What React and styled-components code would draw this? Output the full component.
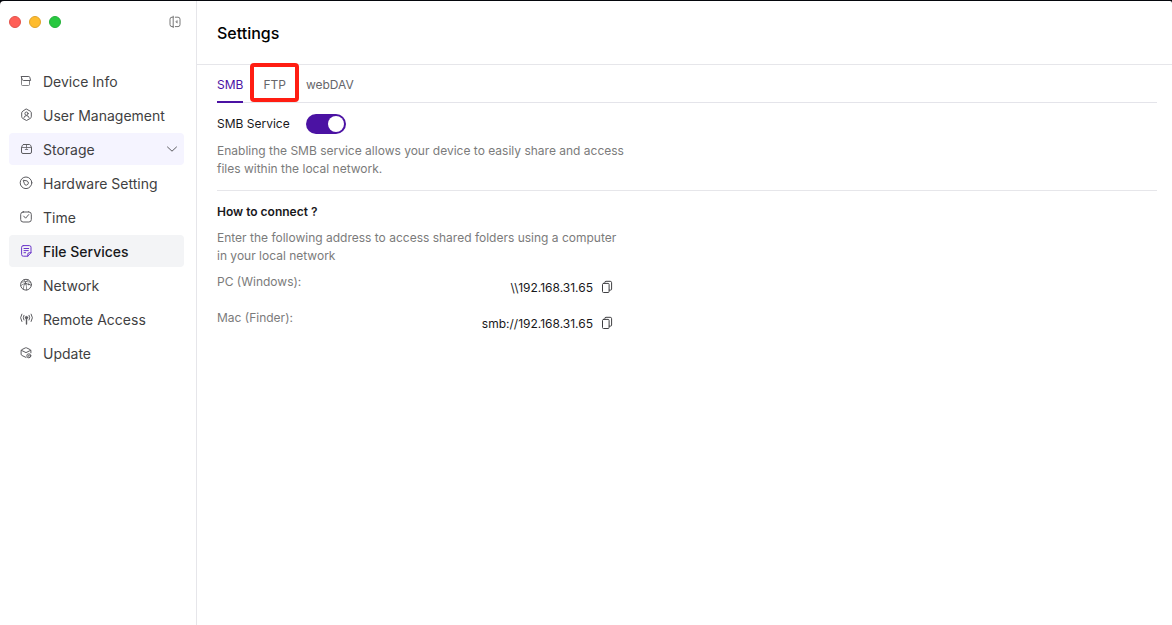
import React, { useState } from "react";
import styled, { createGlobalStyle, css } from "styled-components";

const GlobalStyle = createGlobalStyle`
  * {
    box-sizing: border-box;
  }
  body {
    margin: 0;
    background-color: #05070c;
    font-family: Inter, "Liberation Sans", sans-serif;
    color: #18181b;
  }
  button {
    border: none;
    padding: 0;
    background: none;
    font: inherit;
    color: inherit;
    cursor: pointer;
  }
`;

const Page = styled.div`
  min-height: 100vh;
  padding-top: 1px;
  display: flex;
`;

const Window = styled.div`
  flex: 1;
  display: flex;
  background-color: white;
  border-radius: 4px 2px 0 0;
`;

const Sidebar = styled.aside`
  width: 197px;
  flex-shrink: 0;
  border-right: 1px solid #e6e6ea;
`;

const TitleBar = styled.div`
  height: 42px;
  padding: 0 14px 0 9px;
  display: flex;
  align-items: center;
  justify-content: space-between;
`;

const Lights = styled.div`
  display: flex;
  gap: 8px;
`;

const Light = styled.button`
  width: 12px;
  height: 12px;
  border-radius: 50%;
  border: 1px solid ${(props) => props.$border};
  background-color: ${(props) => props.$color};
`;

const IconButton = styled.button`
  width: ${(props) => props.$size || 14}px;
  height: ${(props) => props.$size || 14}px;
  display: flex;
  align-items: center;
  justify-content: center;
  color: ${(props) => props.$color || "#777"};
`;

const Nav = styled.nav`
  padding: 22px 12px 0 9px;
  display: flex;
  flex-direction: column;
  gap: 2px;
`;

const NavItem = styled.button`
  height: 32px;
  padding: 0 5px 0 10px;
  display: flex;
  align-items: center;
  gap: 10px;
  border-radius: 4px;
  font-size: 14px;
  text-align: left;
  color: #3f3f42;
  svg {
    flex-shrink: 0;
    color: #5c5c60;
  }
  ${(props) =>
    props.$open &&
    css`
      background-color: #f5f4ff;
    `}
  ${(props) =>
    props.$active &&
    css`
      background-color: #f3f4f6;
      color: #18181b;
      font-weight: 500;
      svg {
        color: #6a35c9;
      }
    `}
`;

const NavLabel = styled.span`
  flex: 1;
`;

const Main = styled.main`
  flex: 1;
  min-width: 0;
`;

const Header = styled.header`
  height: 64px;
  padding: 0 20px;
  display: flex;
  align-items: center;
  border-bottom: 1px solid #e6e6ea;
`;

const Title = styled.h1`
  margin: 0;
  font-size: 16px;
  font-weight: 500;
  line-height: 24px;
  color: #000;
`;

const Content = styled.div`
  padding: 0 15px 0 20px;
`;

const Tabs = styled.div`
  height: 38px;
  display: flex;
  gap: 20px;
  border-bottom: 1px solid #e4e4ea;
`;

const Tab = styled.button`
  position: relative;
  height: 38px;
  font-size: 12px;
  color: ${(props) => (props.$active ? "#4b12a3" : "#66666a")};
  box-shadow: inset 0 -2px ${(props) => (props.$active ? "#4b12a3" : "transparent")};
`;

const Marker = styled.span`
  position: absolute;
  inset: -2px -13px 1px;
  border: 4px solid #ff1d12;
  border-radius: 4px;
`;

const Section = styled.section`
  padding: ${(props) => props.$padding};
  border-bottom: ${(props) => (props.$line ? "1px solid #e6e6ea" : "none")};
`;

const SwitchRow = styled.label`
  display: flex;
  align-items: center;
  gap: 16px;
  font-size: 12px;
  line-height: 18px;
`;

const Switch = styled.input`
  appearance: none;
  width: 40px;
  height: 20px;
  margin: 0;
  padding: 2px;
  display: flex;
  border-radius: 10px;
  background-color: #bbb;
  cursor: pointer;
  &::before {
    content: "";
    width: 16px;
    height: 16px;
    border-radius: 50%;
    background-color: white;
  }
  &:checked {
    justify-content: flex-end;
    background-color: #4b12a3;
  }
`;

const SubTitle = styled.h2`
  margin: 0;
  font-size: 12px;
  font-weight: 600;
  line-height: 18px;
`;

const Desc = styled.p`
  max-width: 408px;
  margin: 8px 0 0;
  font-size: 12px;
  line-height: 18px;
  color: #7b7b7b;
`;

const AddressList = styled.div`
  max-width: 400px;
  margin-top: 8px;
`;

const AddressRow = styled.div`
  height: 36px;
  display: flex;
  align-items: flex-start;
  justify-content: space-between;
  font-size: 12px;
`;

const AddressName = styled.span`
  line-height: 18px;
  color: #7b7b7b;
`;

const Address = styled.div`
  height: 28px;
  display: flex;
  align-items: center;
  gap: 4px;
`;

const Svg = ({ children, size = 14, box = 14 }) => (
  <svg
    width={size}
    height={size}
    viewBox={`0 0 ${box} ${box}`}
    fill="none"
    stroke="currentColor"
    strokeWidth="1"
    strokeLinecap="round"
    strokeLinejoin="round"
  >
    {children}
  </svg>
);

const DeviceIcon = () => (
  <Svg>
    <path d="M2.5 2.5h7.3q.8 0 1 .8l.8 3.2H4.3q-.8 0-1-.8z" />
    <path d="M2.5 2.5v8q0 1 1 1h6q1 0 1-1v-4" strokeOpacity="0.75" />
  </Svg>
);

const UserIcon = () => (
  <Svg>
    <path d="M7.5 1.1 11.3 3.2q1 .6 1 1.6v4q0 1-1 1.6L7.5 12.5 3.7 10.4q-1-.6-1-1.6v-4q0-1 1-1.6z" />
    <circle cx="7.5" cy="5.6" r="1.6" />
    <path d="M5 9.5q.4-1.9 2.5-1.9T10 9.5" />
  </Svg>
);

const StorageIcon = () => (
  <Svg>
    <path d="M4.6 2.5h5.8q.8 0 1.1.7l1 2.3v4.5q0 1.5-1.5 1.5H4q-1.5 0-1.5-1.5V5.5l1-2.3q.3-.7 1.1-.7z" />
    <path d="M2.5 5.5h10" strokeOpacity="0.8" />
    <path d="M7.5 2.7v3.6M6.3 7.5h2.4" strokeOpacity="0.8" />
  </Svg>
);

const HardwareIcon = () => (
  <Svg>
    <circle cx="7" cy="6.8" r="5.8" />
    <path d="M4.6 4.3 8 4.9q1.5.8 1.4 2.2T7.6 9.1 5.4 7.8z" />
  </Svg>
);

const TimeIcon = () => (
  <Svg>
    <rect x="1.7" y="2" width="10.6" height="10" rx="2.4" />
    <path d="M4.7 6.1 6.6 8.2 9.7 4.6" />
    <path d="M4.3 1.7h.1M9.6 1.7h.1" />
  </Svg>
);

const FileIcon = () => (
  <Svg>
    <path d="M4.3 1.6h6q1.7 0 1.7 1.7v5.4L8.8 12.2H4.3q-1.7 0-1.7-1.7V3.3q0-1.7 1.7-1.7z" />
    <path d="M12 8.7h-1.7q-1.5 0-1.5 1.5v2M5 4.5h4.7M5 6.6h4.3M5 8.7h1.6" />
  </Svg>
);

const NetworkIcon = () => (
  <Svg>
    <circle cx="7" cy="6.7" r="5.4" />
    <path
      d="M2.4 4.2Q7 2.6 11.6 4.2M1.7 7.6q2.7-2.1 5.1-1.9 3.4 0 5.4 1.8M5 1.9Q7.8 4.6 7.6 12M9.2 1.8Q4.7 4 4.3 11.2"
      strokeWidth="0.7"
    />
    <circle cx="6.6" cy="5.6" r="0.7" fill="currentColor" strokeWidth="0.5" />
    <circle cx="9.8" cy="6.4" r="0.7" fill="currentColor" strokeWidth="0.5" />
  </Svg>
);

const RemoteIcon = () => (
  <Svg>
    <circle cx="7.5" cy="5.6" r="1.2" fill="currentColor" />
    <path d="M7.5 6v6" strokeWidth="1.4" />
    <path d="M4.9 3.3Q3.5 5.6 4.9 8M10.1 3.3q1.4 2.3 0 4.7M2.8 2.1Q.2 5.7 2.8 9.5M12.2 2.1q2.6 3.6 0 7.4" />
  </Svg>
);

const UpdateIcon = () => (
  <Svg>
    <path d="M7 11.4 3 9.5q-.9-.4-.9-1.4V4.8q0-.8.8-1.2L6.3 1.9q.7-.3 1.4 0l3.4 1.7q.8.4.8 1.2v2" />
    <path d="M2.3 4.3 7 6.6 11.7 4.3" />
    <circle cx="9.8" cy="9.8" r="2" />
    <path d="M9.8 9.1v1.4M9.1 9.8h1.4" strokeWidth="0.7" />
  </Svg>
);

const CollapseIcon = () => (
  <Svg>
    <path d="M5.2 2.2H4Q2 2.2 2 4.2v5.4q0 2 2 2h1.2M5.2 1.2v11.4M7.3 2.2H10q2 0 2 2v5.4q0 2-2 2H7.3" />
    <path d="M9.3 5.6v2.6L7.8 6.9z" fill="currentColor" strokeWidth="0.4" />
  </Svg>
);

const ChevronIcon = () => (
  <Svg>
    <path d="M2.5 5 7 9.2 11.5 5" />
  </Svg>
);

const CopyIcon = () => (
  <Svg>
    <rect x="2.5" y="3.4" width="6.6" height="9.1" rx="1" />
    <path d="M4.8 3.2v-.7q0-1.2 1.2-1.2h4.2q1.4 0 1.4 1.4v6.4q0 1-1 1H9.3" />
  </Svg>
);

const menu = [
  { label: "Device Info", icon: DeviceIcon },
  { label: "User Management", icon: UserIcon },
  { label: "Storage", icon: StorageIcon, open: true },
  { label: "Hardware Setting", icon: HardwareIcon },
  { label: "Time", icon: TimeIcon },
  { label: "File Services", icon: FileIcon, active: true },
  { label: "Network", icon: NetworkIcon },
  { label: "Remote Access", icon: RemoteIcon },
  { label: "Update", icon: UpdateIcon },
];

const tabs = ["SMB", "FTP", "webDAV"];

const addresses = [
  { name: "PC (Windows):", value: "\\\\192.168.31.65" },
  { name: "Mac (Finder):", value: "smb://192.168.31.65" },
];

const App = () => {
  const [enabled, setEnabled] = useState(true);
  const [tab, setTab] = useState("SMB");

  return (
    <Page>
      <GlobalStyle />
      <Window>
        <Sidebar>
          <TitleBar>
            <Lights>
              <Light aria-label="Close" $color="#ff5f57" $border="#e2524b" />
              <Light aria-label="Minimize" $color="#febc2e" $border="#e0a32a" />
              <Light aria-label="Maximize" $color="#28c840" $border="#24b13a" />
            </Lights>
            <IconButton aria-label="Collapse sidebar">
              <CollapseIcon />
            </IconButton>
          </TitleBar>
          <Nav>
            {menu.map(({ label, icon: Icon, open, active }) => (
              <NavItem key={label} $open={open} $active={active}>
                <Icon />
                <NavLabel>{label}</NavLabel>
                {open && <ChevronIcon />}
              </NavItem>
            ))}
          </Nav>
        </Sidebar>
        <Main>
          <Header>
            <Title>Settings</Title>
          </Header>
          <Content>
            <Tabs>
              {tabs.map((name) => (
                <Tab key={name} $active={tab === name} onClick={() => setTab(name)}>
                  {name}
                  {name === "FTP" && <Marker />}
                </Tab>
              ))}
            </Tabs>
            <Section $padding="11px 0 12px" $line>
              <SwitchRow>
                SMB Service
                <Switch
                  type="checkbox"
                  checked={enabled}
                  onChange={(e) => setEnabled(e.target.checked)}
                />
              </SwitchRow>
              <Desc>
                Enabling the SMB service allows your device to easily share and access files
                within the local network.
              </Desc>
            </Section>
            <Section $padding="12px 0">
              <SubTitle>How to connect ?</SubTitle>
              <Desc>
                Enter the following address to access shared folders using a computer in your
                local network
              </Desc>
              <AddressList>
                {addresses.map(({ name, value }) => (
                  <AddressRow key={name}>
                    <AddressName>{name}</AddressName>
                    <Address>
                      {value}
                      <IconButton aria-label={`Copy ${value}`} $size={20} $color="#3f3f42">
                        <CopyIcon />
                      </IconButton>
                    </Address>
                  </AddressRow>
                ))}
              </AddressList>
            </Section>
          </Content>
        </Main>
      </Window>
    </Page>
  );
};

export default App;
